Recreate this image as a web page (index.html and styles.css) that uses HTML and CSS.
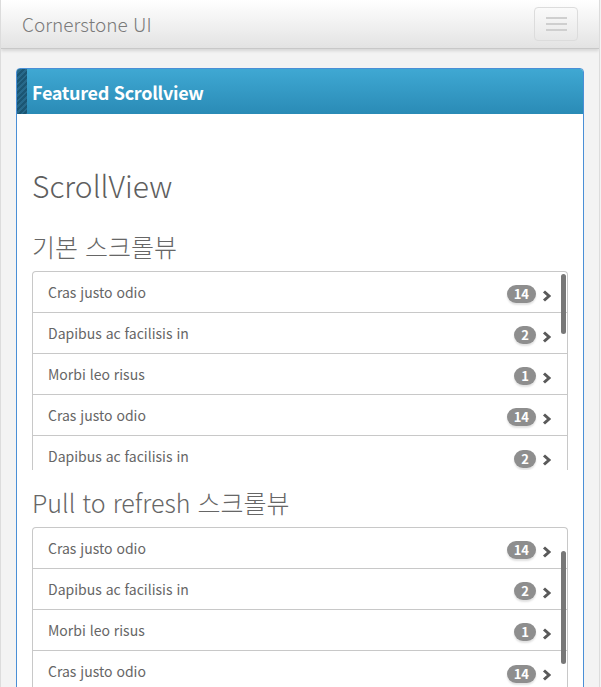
FILE: index.html
```html
<!DOCTYPE html>
<html lang="ko">
<head>
<meta charset="utf-8">
<title>Cornerstone UI</title>
<link rel="stylesheet" href="styles.css">
</head>
<body>
<div class="page">
  <header class="navbar">
    <span class="brand">Cornerstone UI</span>
    <button class="toggle" aria-label="menu"><span></span><span></span><span></span></button>
  </header>
  <main class="content">
    <section class="card">
      <div class="card-head">
        <div class="stripe"></div>
        <h2 class="card-title">Featured Scrollview</h2>
      </div>
      <div class="card-body">
        <h1 class="page-title">ScrollView</h1>
        <h3 class="sec-title">기본 스크롤뷰</h3>
        <div class="scroller s1">
          <ul class="list">
            <li class="row"><span class="label">Cras justo odio</span><span class="badge">14</span><svg class="chev" viewBox="0 0 10 12"><polyline points="2,1.5 7,6 2,10.5"/></svg></li>
            <li class="row"><span class="label">Dapibus ac facilisis in</span><span class="badge">2</span><svg class="chev" viewBox="0 0 10 12"><polyline points="2,1.5 7,6 2,10.5"/></svg></li>
            <li class="row"><span class="label">Morbi leo risus</span><span class="badge">1</span><svg class="chev" viewBox="0 0 10 12"><polyline points="2,1.5 7,6 2,10.5"/></svg></li>
            <li class="row"><span class="label">Cras justo odio</span><span class="badge">14</span><svg class="chev" viewBox="0 0 10 12"><polyline points="2,1.5 7,6 2,10.5"/></svg></li>
            <li class="row"><span class="label">Dapibus ac facilisis in</span><span class="badge">2</span><svg class="chev" viewBox="0 0 10 12"><polyline points="2,1.5 7,6 2,10.5"/></svg></li>
          </ul>
          <div class="thumb t1"></div>
        </div>
        <h3 class="sec-title sec2">Pull to refresh 스크롤뷰</h3>
        <div class="scroller s2">
          <ul class="list">
            <li class="row"><span class="label">Cras justo odio</span><span class="badge">14</span><svg class="chev" viewBox="0 0 10 12"><polyline points="2,1.5 7,6 2,10.5"/></svg></li>
            <li class="row"><span class="label">Dapibus ac facilisis in</span><span class="badge">2</span><svg class="chev" viewBox="0 0 10 12"><polyline points="2,1.5 7,6 2,10.5"/></svg></li>
            <li class="row"><span class="label">Morbi leo risus</span><span class="badge">1</span><svg class="chev" viewBox="0 0 10 12"><polyline points="2,1.5 7,6 2,10.5"/></svg></li>
            <li class="row"><span class="label">Cras justo odio</span><span class="badge">14</span><svg class="chev" viewBox="0 0 10 12"><polyline points="2,1.5 7,6 2,10.5"/></svg></li>
          </ul>
          <div class="thumb t2"></div>
        </div>
      </div>
    </section>
  </main>
</div>
</body>
</html>
```

FILE: styles.css
```css
* { box-sizing: border-box; }
html, body { margin: 0; padding: 0; }
body {
  background: #f3f3f3;
  font-family: "Noto Sans CJK KR", "Noto Sans", sans-serif;
  color: #555;
  overflow: hidden;
  height: 687px;
}
.page {
  width: 600px;
  height: 687px;
  border-left: 1px solid #dcdcdc;
  border-right: 1px solid #dcdcdc;
  overflow: hidden;
}
.navbar {
  height: 49px;
  display: flex;
  align-items: center;
  justify-content: space-between;
  padding: 0 21px 0 21px;
  background: linear-gradient(#ffffff, #e3e3e3);
  border-bottom: 1px solid #c8c8c8;
  box-shadow: 0 2px 3px rgba(0,0,0,0.12);
}
.brand {
  font-size: 19px;
  color: #7a7a7a;
  font-weight: 300;
  margin-top: -2px;
}
.toggle {
  width: 44px;
  height: 34px;
  border: 1px solid #dcdcdc;
  border-radius: 4px;
  background: transparent;
  display: flex;
  flex-direction: column;
  align-items: center;
  justify-content: center;
  gap: 4px;
  padding: 0;
  margin-top: -1px;
}
.toggle span {
  display: block;
  width: 21px;
  height: 2px;
  background: #cfcfcf;
}
.content {
  padding: 19px 15px 0 15px;
}
.card {
  border: 1px solid #4a8fd6;
  border-radius: 4px 4px 0 0;
  background: #fff;
  overflow: hidden;
  height: 640px;
}
.card-head {
  height: 45px;
  display: flex;
  align-items: center;
  background: linear-gradient(#3fa8d3, #2a8bb6);
}
.stripe {
  width: 10px;
  align-self: stretch;
  background: repeating-linear-gradient(135deg, #1b5673 0 2px, #27698a 2px 4px);
}
.card-title {
  margin: 0 0 0 5px;
  font-size: 18px;
  font-weight: bold;
  color: #fff;
  letter-spacing: -0.3px;
}
.card-body {
  padding: 53px 15px 0 15px;
}
.page-title {
  margin: 0;
  font-size: 30px;
  line-height: 36px;
  font-weight: 300;
  color: #5e5e5e;
}
.sec-title {
  margin: 29px 0 10px 0;
  font-size: 25px;
  line-height: 29px;
  font-weight: 300;
  color: #666;
}
.sec2 { margin-top: 18px; }
.scroller {
  position: relative;
  overflow: hidden;
  border: 1px solid #c8c8c8;
  border-bottom: none;
}
.s1 { height: 199px; border-radius: 4px 4px 0 0; }
.s2 { height: 170px; border-radius: 4px 4px 0 0; }
.list {
  list-style: none;
  margin: 0;
  padding: 0;
}
.row {
  height: 41px;
  display: flex;
  align-items: center;
  padding: 0 15px;
  border-bottom: 1px solid #c8c8c8;
  font-size: 14px;
  color: #666;
}
.row:last-child { border-bottom: none; }
.label { flex: 1; margin-top: -1px; }
.badge {
  min-width: 20px;
  height: 18px;
  padding: 0 7px;
  border-radius: 9px;
  background: #8e8e8e;
  color: #fff;
  font-size: 13px;
  font-weight: bold;
  line-height: 18px;
  text-align: center;
  box-shadow: 0 2px 2px rgba(0,0,0,0.12);
  margin-top: 4px;
}
.chev {
  width: 10px;
  height: 12px;
  margin-left: 6px;
  margin-top: 7px;
  fill: none;
  stroke: #5a5a5a;
  stroke-width: 3;
}
.thumb {
  position: absolute;
  right: 1px;
  width: 5px;
  background: #777;
  border-radius: 3px;
}
.t1 { top: 2px; height: 60px; }
.t2 { top: 23px; height: 113px; }
```
